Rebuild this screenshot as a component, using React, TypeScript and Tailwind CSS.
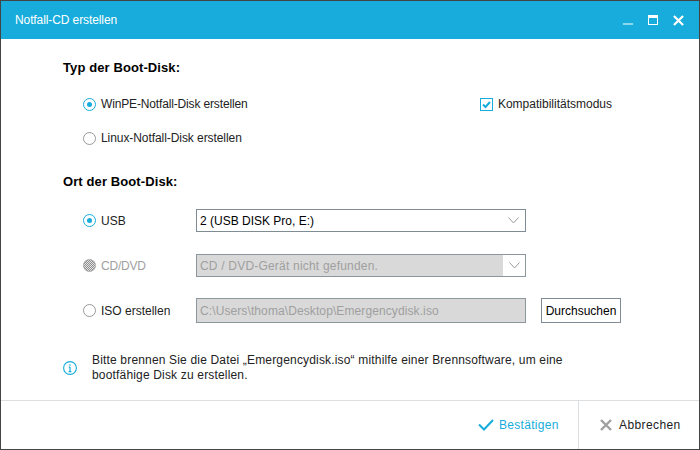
const FONT = "font-['Liberation_Sans',sans-serif]"

function Radio({ checked, disabled }: { checked?: boolean; disabled?: boolean }) {
  if (disabled) {
    return (
      <span className="h-[13px] w-[13px] shrink-0 rounded-full border border-[#aaaaaa] bg-[repeating-conic-gradient(#8f8f8f_0%_25%,#e4e4e4_0%_50%)] bg-[length:2px_2px]" />
    )
  }
  return (
    <span
      className={`flex h-[13px] w-[13px] shrink-0 items-center justify-center rounded-full border ${
        checked ? 'border-[#17acdb]' : 'border-[#999999]'
      }`}
    >
      {checked && <span className="h-[5px] w-[5px] rounded-full bg-[#17acdb]" />}
    </span>
  )
}

function Chevron() {
  return (
    <svg width="11" height="7" viewBox="0 0 11 7" fill="none" stroke="#9a9a9a" strokeWidth="1">
      <path d="M0.5 0.5 L5.5 6 L10.5 0.5" />
    </svg>
  )
}

function Cross({ size, stroke, width }: { size: number; stroke: string; width: number }) {
  return (
    <svg width={size} height={size} viewBox="0 0 12 12" fill="none" stroke={stroke} strokeWidth={width} className="shrink-0">
      <path d="M1 1 L11 11 M11 1 L1 11" />
    </svg>
  )
}

export default function App() {
  return (
    <div className={`flex h-[450px] w-[700px] flex-col overflow-hidden border border-[#444444] bg-white text-[12px] text-[#222222] ${FONT}`}>
      <div className="flex h-[38px] shrink-0 items-center justify-between bg-[#17acdb] pl-[14px] pr-[15px] text-white">
        <span className="tracking-[-0.1px]">Notfall-CD erstellen</span>
        <div className="flex items-center gap-[15px]">
          <span className="mt-[8px] h-[2px] w-[10px] bg-[#8ed6ed]" />
          <span className="h-[10px] w-[10px] border border-t-[3px] border-white" />
          <Cross size={11} stroke="#ffffff" width={2.4} />
        </div>
      </div>

      <div className="flex-1 pl-[62px] pr-[78px]">
        <div className="mt-[19px] h-[20px] text-[13px] font-bold leading-[20px] tracking-[0.1px] text-black">Typ der Boot-Disk:</div>

        <div className="ml-[20px] mt-[16px] flex h-[20px] items-center justify-between">
          <div className="flex items-center gap-[5px]">
            <Radio checked />
            <span className="tracking-[-0.15px]">WinPE-Notfall-Disk erstellen</span>
          </div>
          <div className="mr-[9px] flex items-center gap-[5px]">
            <span className="flex h-[13px] w-[13px] items-center justify-center border border-[#17acdb]">
              <svg width="11" height="11" viewBox="0 0 11 11" fill="none" stroke="#17acdb" strokeWidth="2">
                <path d="M2 5.5 L4.5 8 L9 3" />
              </svg>
            </span>
            <span>Kompatibilitätsmodus</span>
          </div>
        </div>

        <div className="ml-[20px] mt-[14px] flex h-[20px] items-center gap-[5px]">
          <Radio />
          <span className="tracking-[-0.07px]">Linux-Notfall-Disk erstellen</span>
        </div>

        <div className="mt-[24px] h-[20px] text-[13px] font-bold leading-[20px] tracking-[0.1px] text-black">Ort der Boot-Disk:</div>

        <div className="ml-[20px] mt-[17px] flex h-[23px] items-center">
          <div className="flex w-[113px] items-center gap-[5px]">
            <Radio checked />
            <span>USB</span>
          </div>
          <div className="flex h-[23px] w-[330px] items-center justify-between border border-[#7f8c94] pl-[3px] pr-[6px] text-black">
            <span>2 (USB DISK Pro, E:)</span>
            <Chevron />
          </div>
        </div>

        <div className="ml-[20px] mt-[22px] flex h-[23px] items-center">
          <div className="flex w-[113px] items-center gap-[5px] text-[#a0a0a0]">
            <Radio disabled />
            <span className="tracking-[-0.2px]">CD/DVD</span>
          </div>
          <div className="flex h-[23px] w-[330px] items-center border border-[#8c979d]">
            <span className="flex h-full flex-1 items-center bg-[#d9d9d9] pl-[3px] tracking-[0.2px] text-[#9f9f9f]">
              CD / DVD-Gerät nicht gefunden.
            </span>
            <span className="flex w-[22px] justify-center bg-white">
              <Chevron />
            </span>
          </div>
        </div>

        <div className="ml-[20px] mt-[21px] flex h-[25px] items-center">
          <div className="flex w-[113px] items-center gap-[5px]">
            <Radio />
            <span>ISO erstellen</span>
          </div>
          <div className="flex h-[25px] w-[330px] items-center border border-[#8c979d] bg-[#d9d9d9] pl-[3px] tracking-[0.1px] text-[#9f9f9f]">
            C:\Users\thoma\Desktop\Emergencydisk.iso
          </div>
          <div className="ml-[15px] flex h-[25px] w-[80px] items-center justify-center border border-[#7f8c94] text-black">
            Durchsuchen
          </div>
        </div>

        <div className="mt-[30px] flex items-center">
          <svg width="14" height="14" viewBox="0 0 14 14" fill="none" className="shrink-0">
            <circle cx="7" cy="7" r="6.4" stroke="#17acdb" strokeWidth="1.1" />
            <path d="M7 3.2v1.5M7 6v4.6M5.8 6.2H7M5.6 10.6h2.8" stroke="#17acdb" strokeWidth="1.2" />
          </svg>
          <p className="ml-[15px] w-[500px] leading-[15px] tracking-[0.17px]">
            Bitte brennen Sie die Datei „Emergencydisk.iso“ mithilfe einer Brennsoftware, um eine bootfähige Disk zu erstellen.
          </p>
        </div>
      </div>

      <div className="flex h-[49px] shrink-0 justify-end border-t border-[#dcdfe2]">
        <div className="flex w-[128px] items-center gap-[5px] border-r border-[#dcdfe2] pl-[27px] tracking-[0.3px] text-[#17acdb]">
          <svg width="16" height="12" viewBox="0 0 16 12" fill="none" stroke="#17acdb" strokeWidth="2" className="shrink-0">
            <path d="M1 5.5 L6 10.5 L15 1" />
          </svg>
          <span>Bestätigen</span>
        </div>
        <div className="flex w-[120px] items-center gap-[7px] pl-[21px] tracking-[0.4px]">
          <Cross size={12} stroke="#a0a0a0" width={2.4} />
          <span>Abbrechen</span>
        </div>
      </div>
    </div>
  )
}
